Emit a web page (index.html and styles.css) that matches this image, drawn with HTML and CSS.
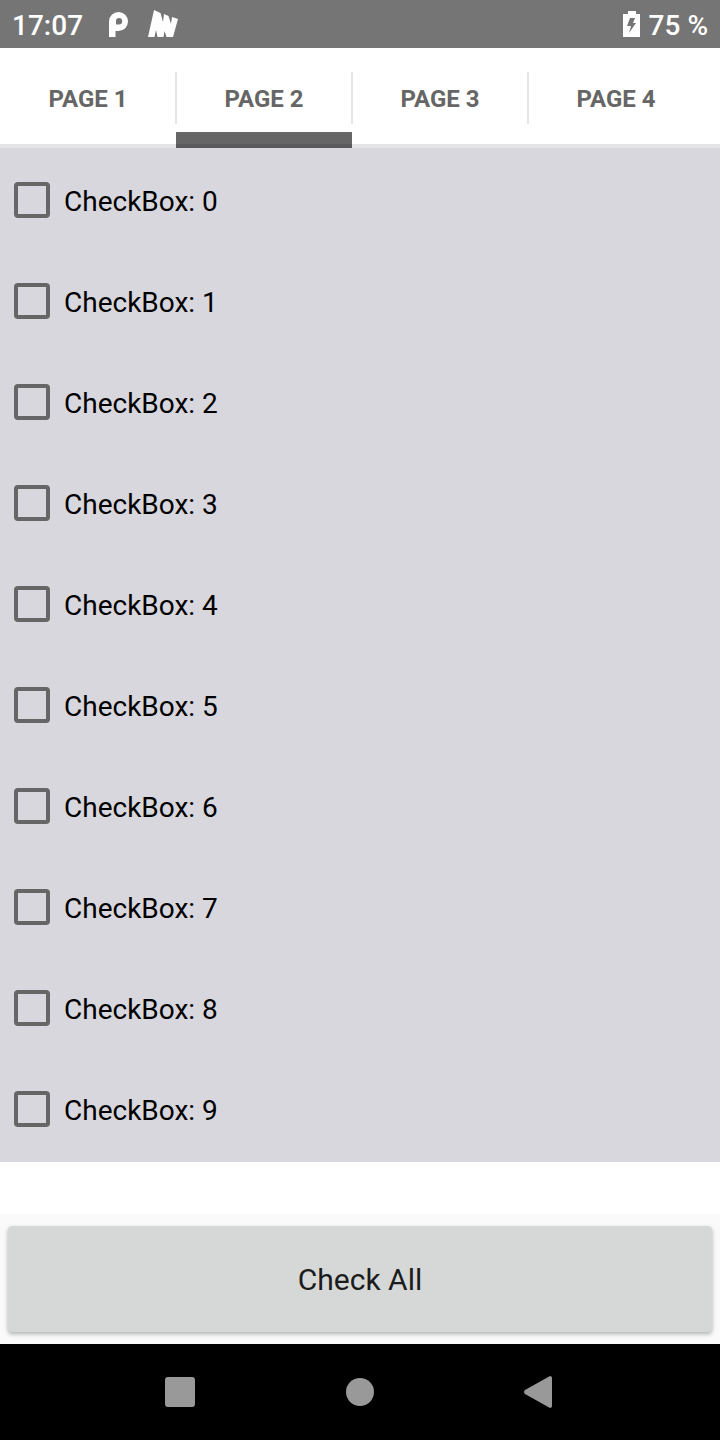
FILE: index.html
```html
<!DOCTYPE html>
<html lang="en">
<head>
    <meta charset="UTF-8">
    <meta name="viewport" content="width=device-width, initial-scale=1.0">
    <title>Page 2</title>
    <link rel="stylesheet" href="styles.css">
</head>
<body>

    <header class="status-bar">
        <span>17:07</span>
        <svg class="icon-p" width="20" height="26" viewBox="0 0 20 26" aria-hidden="true">
            <path fill="#fff" fill-rule="evenodd" d="M0 25V9.500A9.500 9.500 0 0 1 9.500 0A9.500 9.500 0 0 1 19 9.500A9.500 9.500 0 0 1 9.500 19H6.500V25ZM7 12.500H10A3.200 3.200 0 0 0 10 6.100A3.100 3.100 0 0 0 7 9.200Z"/>
        </svg>
        <svg class="icon-m" width="30" height="28" viewBox="0 0 30 28" aria-hidden="true">
            <path fill="#fff" d="M0 27L6 0L12.500 3L15 12L16 4L20.500 6L23 14L24 7L30 9L25 27H18.500L16.500 21L15.500 27H9.500L8 20L6.500 27Z"/>
        </svg>
        <div class="battery">
            <svg width="18" height="26" viewBox="0 0 18 26" aria-hidden="true">
                <path fill="#fff" d="M5 0H13V3H17V26H0V3H5Z"/>
                <path fill="#757575" d="M7 7H12L10 12H13L6 22L8 15H4Z"/>
            </svg>
            <span>75 %</span>
        </div>
    </header>

    <nav class="tabs">
        <a href="#page1">PAGE 1</a>
        <a href="#page2" class="active" aria-current="page">PAGE 2</a>
        <a href="#page3">PAGE 3</a>
        <a href="#page4">PAGE 4</a>
    </nav>

    <main>
        <div class="checkbox-list" id="page2">
            <label><input type="checkbox"> CheckBox: 0</label>
            <label><input type="checkbox"> CheckBox: 1</label>
            <label><input type="checkbox"> CheckBox: 2</label>
            <label><input type="checkbox"> CheckBox: 3</label>
            <label><input type="checkbox"> CheckBox: 4</label>
            <label><input type="checkbox"> CheckBox: 5</label>
            <label><input type="checkbox"> CheckBox: 6</label>
            <label><input type="checkbox"> CheckBox: 7</label>
            <label><input type="checkbox"> CheckBox: 8</label>
            <label><input type="checkbox"> CheckBox: 9</label>
        </div>
    </main>

    <div class="actions">
        <button type="button" class="check-all" onclick="checkAll()">Check All</button>
    </div>

    <footer class="nav-bar">
        <button type="button" aria-label="Recent apps">
            <svg width="32" height="32" viewBox="0 0 32 32"><rect x="1" y="1" width="30" height="30" rx="3"/></svg>
        </button>
        <button type="button" aria-label="Home">
            <svg width="32" height="32" viewBox="0 0 32 32"><circle cx="16" cy="16" r="14"/></svg>
        </button>
        <button type="button" aria-label="Back">
            <svg width="32" height="32" viewBox="0 0 32 32"><path d="M26 0Q28 0 28 2V30Q28 32 26 32L1 18Q-1 16 1 14Z"/></svg>
        </button>
    </footer>

    <script>
        function checkAll() {
            document.querySelectorAll(".checkbox-list input").forEach(box => {
                box.checked = true;
            });
        }
    </script>
</body>
</html>
```
FILE: styles.css
```css
* {
    box-sizing: border-box;
}

body {
    display: flex;
    flex-direction: column;
    min-height: 100vh;
    margin: 0;
    font-family: Roboto, sans-serif;
    background: #fff;
}

button {
    border: none;
    padding: 0;
    font-family: inherit;
    cursor: pointer;
}

/* Status bar */
.status-bar {
    display: flex;
    align-items: center;
    height: 48px;
    padding: 2px 12px 0;
    background: #757575;
    color: #fff;
    font-size: 28px;
    font-weight: 500;
}

.icon-p {
    margin-left: 26px;
}

.icon-m {
    margin: 0 0 2px 19px;
}

.battery {
    display: flex;
    align-items: center;
    gap: 8px;
    margin-left: auto;
}

.battery svg {
    margin-bottom: 2px;
}

/* Tabs */
.tabs {
    position: relative;
    display: flex;
    height: 100px;
}

.tabs a {
    position: relative;
    display: flex;
    align-items: center;
    justify-content: center;
    width: 176px;
    padding-top: 2px;
    color: #666;
    font-size: 24px;
    font-weight: bold;
    text-decoration: none;
}

/* Divider between two tabs */
.tabs a + a::before {
    content: "";
    position: absolute;
    top: 24px;
    left: -1px;
    width: 2px;
    height: 52px;
    background: #e5e5e5;
}

.tabs .active {
    box-shadow: inset 0 -16px #666;
}

/* Line under the tabs, drawn over the active marker */
.tabs::after {
    content: "";
    position: absolute;
    right: 0;
    bottom: 0;
    left: 0;
    height: 4px;
    background: rgba(0, 0, 0, 0.1);
}

/* Checkbox list */
main {
    flex: 1;
}

.checkbox-list {
    display: flex;
    flex-direction: column;
    padding: 2px 0;
    background: #d8d7dd;
}

.checkbox-list label {
    display: flex;
    align-items: center;
    gap: 14px;
    height: 101px;
    padding: 2px 14px 0;
    color: #000;
    font-size: 28px;
}

.checkbox-list input {
    appearance: none;
    width: 36px;
    height: 36px;
    margin: 0 0 4px;
    border: 4px solid #666;
    border-radius: 4px;
}

.checkbox-list input:checked {
    background: #666;
}

/* Check All button */
.actions {
    padding: 12px 8px;
    background: #fafafa;
}

.check-all {
    display: block;
    width: 100%;
    height: 106px;
    border-radius: 4px;
    background: #d6d8d7;
    box-shadow: 0 2px 4px rgba(0, 0, 0, 0.3);
    color: #1c1c1c;
    font-size: 30px;
}

/* System navigation */
.nav-bar {
    display: flex;
    height: 96px;
    padding: 0 12.5%;
    background: #000;
}

.nav-bar button {
    display: flex;
    flex: 1;
    align-items: center;
    justify-content: center;
    background: none;
}

.nav-bar svg {
    fill: #999;
}
```
